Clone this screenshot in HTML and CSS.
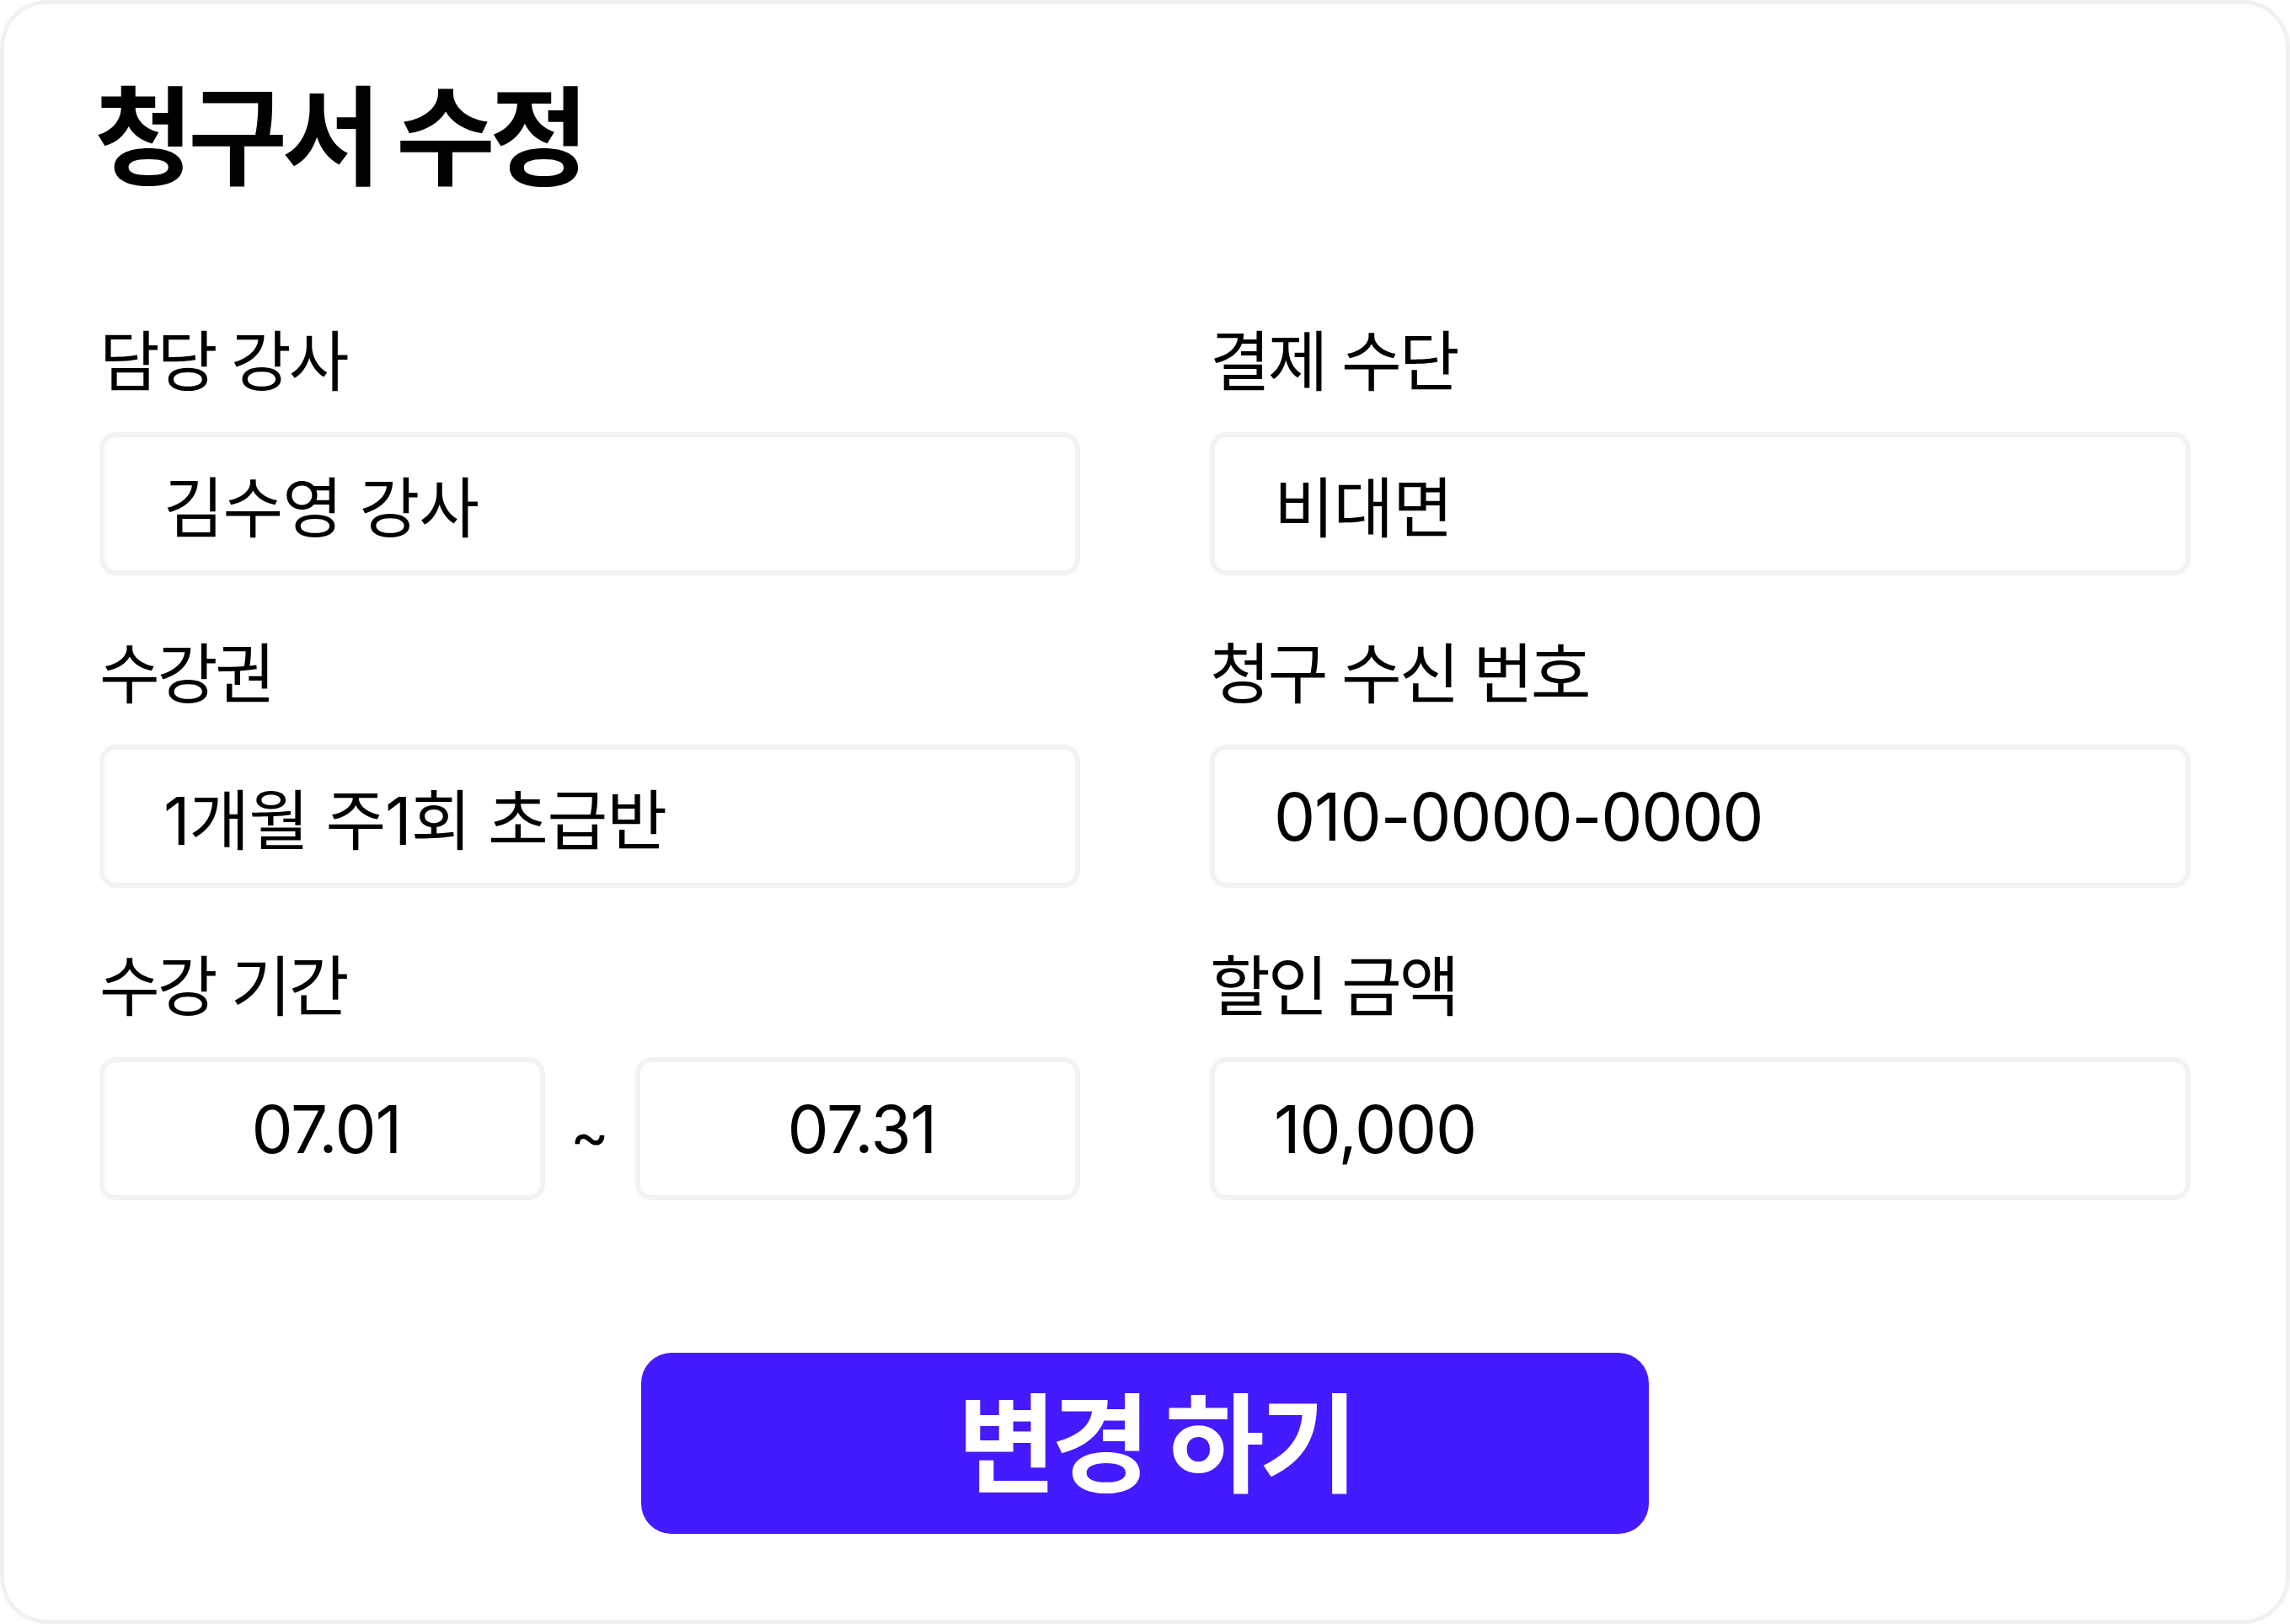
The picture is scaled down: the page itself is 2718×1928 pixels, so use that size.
FILE: index.html
```html
<!DOCTYPE html>
<html lang="ko">
<head>
    <meta charset="UTF-8">
    <meta name="viewport" content="width=device-width, initial-scale=1.0">
    <title>청구서 수정</title>
    <link rel="stylesheet" href="styles.css">
</head>
<body>
    <div class="invoice-card">
        <h1 class="invoice-title">청구서 수정</h1>

        <div class="field-grid">
            <div class="field">
                <div class="field-label">담당 강사</div>
                <div class="field-box">김수영 강사</div>
            </div>
            <div class="field">
                <div class="field-label">결제 수단</div>
                <div class="field-box">비대면</div>
            </div>

            <div class="field">
                <div class="field-label">수강권</div>
                <div class="field-box">1개월 주1회 초급반</div>
            </div>
            <div class="field">
                <div class="field-label">청구 수신 번호</div>
                <div class="field-box">010-0000-0000</div>
            </div>

            <div class="field">
                <div class="field-label">수강 기간</div>
                <div class="period-row">
                    <div class="field-box date-box">07.01</div>
                    <span class="period-sep">~</span>
                    <div class="field-box date-box">07.31</div>
                </div>
            </div>
            <div class="field">
                <div class="field-label">할인 금액</div>
                <div class="field-box">10,000</div>
            </div>
        </div>

        <div class="submit-wrap">
            <button class="submit-btn">변경 하기</button>
        </div>
    </div>
</body>
</html>
```

FILE: styles.css
```css
* {
    box-sizing: border-box;
}
body {
    margin: 0;
    background-color: white;
    color: black;
    font-family: Inter, "Noto Sans CJK KR", sans-serif;
}
.invoice-card {
    width: 100vw;
    height: 100vh;
    border: 5px solid #f1f1f1;
    border-radius: 56px;
    padding: 95px 113px 0;
    display: flex;
    flex-direction: column;
}
.invoice-title {
    margin: 0 0 0 -6px;
    font-size: 128px;
    line-height: 1;
    font-weight: 700;
    letter-spacing: -0.05em;
}
.field-grid {
    margin-top: 163px;
    display: grid;
    grid-template-columns: 1fr 1fr;
    column-gap: 154px;
    row-gap: 79px;
}
.field-label {
    font-size: 78px;
    line-height: 1;
    letter-spacing: -0.04em;
    margin-bottom: 44px;
}
.field-box {
    height: 170px;
    border: 6px solid #f3f3f3;
    border-radius: 20px;
    padding-left: 70px;
    display: flex;
    align-items: center;
    font-size: 78px;
    letter-spacing: -0.015em;
}
.period-row {
    display: flex;
    align-items: center;
}
.date-box {
    flex: 1;
    padding-left: 10px;
    justify-content: center;
}
.period-sep {
    width: 107px;
    text-align: center;
    font-size: 70px;
    padding-top: 14px;
}
.submit-wrap {
    margin-top: 181px;
    display: flex;
    justify-content: center;
}
.submit-btn {
    width: 1196px;
    height: 215px;
    padding: 0 0 14px 24px;
    border: none;
    border-radius: 36px;
    background-color: #461aff;
    color: white;
    font-family: inherit;
    font-size: 128px;
    font-weight: 700;
    letter-spacing: -0.05em;
    cursor: pointer;
}
```
